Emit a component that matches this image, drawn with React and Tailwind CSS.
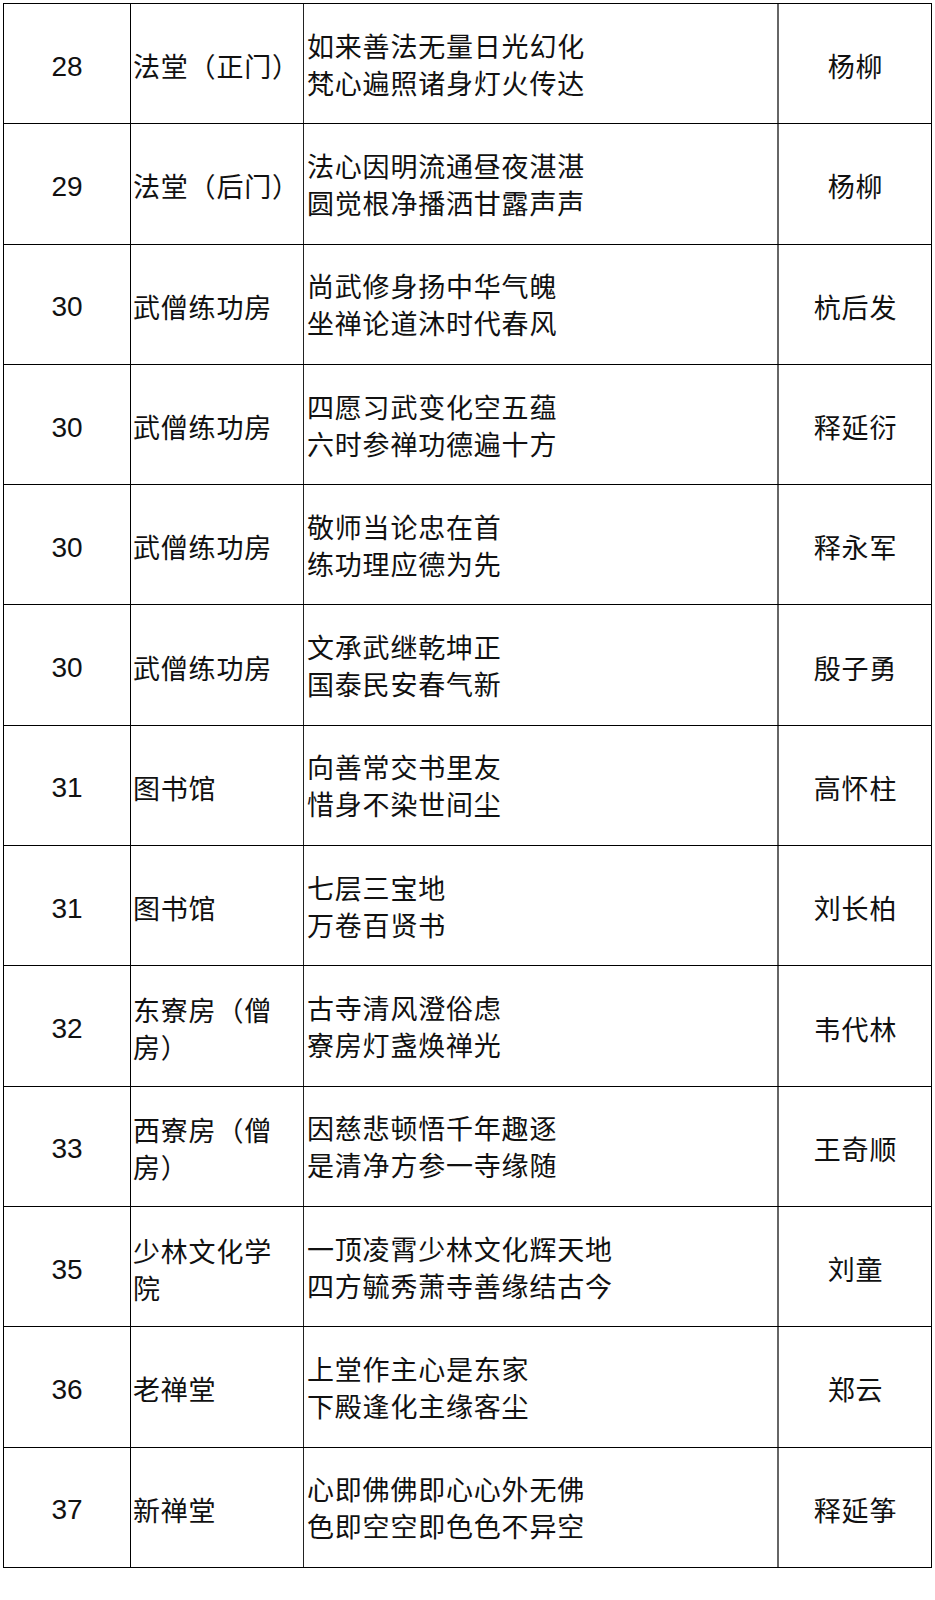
const rows = [
	{ no: "28", place: ["法堂（正门）"], lines: ["如来善法无量日光幻化", "梵心遍照诸身灯火传达"], by: "杨柳" },
	{ no: "29", place: ["法堂（后门）"], lines: ["法心因明流通昼夜湛湛", "圆觉根净播洒甘露声声"], by: "杨柳" },
	{ no: "30", place: ["武僧练功房"], lines: ["尚武修身扬中华气魄", "坐禅论道沐时代春风"], by: "杭后发" },
	{ no: "30", place: ["武僧练功房"], lines: ["四愿习武变化空五蕴", "六时参禅功德遍十方"], by: "释延衍" },
	{ no: "30", place: ["武僧练功房"], lines: ["敬师当论忠在首", "练功理应德为先"], by: "释永军" },
	{ no: "30", place: ["武僧练功房"], lines: ["文承武继乾坤正", "国泰民安春气新"], by: "殷子勇" },
	{ no: "31", place: ["图书馆"], lines: ["向善常交书里友", "惜身不染世间尘"], by: "高怀柱" },
	{ no: "31", place: ["图书馆"], lines: ["七层三宝地", "万卷百贤书"], by: "刘长柏" },
	{ no: "32", place: ["东寮房（僧", "房）"], lines: ["古寺清风澄俗虑", "寮房灯盏焕禅光"], by: "韦代林" },
	{ no: "33", place: ["西寮房（僧", "房）"], lines: ["因慈悲顿悟千年趣逐", "是清净方参一寺缘随"], by: "王奇顺" },
	{ no: "35", place: ["少林文化学", "院"], lines: ["一顶凌霄少林文化辉天地", "四方毓秀萧寺善缘结古今"], by: "刘童" },
	{ no: "36", place: ["老禅堂"], lines: ["上堂作主心是东家", "下殿逢化主缘客尘"], by: "郑云" },
	{ no: "37", place: ["新禅堂"], lines: ["心即佛佛即心心外无佛", "色即空空即色色不异空"], by: "释延筝" },
];

const cjk = "font-['Noto_Sans_CJK_SC',sans-serif] text-[27px] tracking-[0.8px] text-[#111] leading-[37px]";

const Row = ({ row }) => (
	<div className="grid grid-cols-[127px_173px_475px_153px] h-[120.3px] border-b border-black">
		<div className="flex items-center justify-center border-r border-black pt-[6px] font-['Liberation_Sans',sans-serif] text-[28px] text-[#111]">
			{row.no}
		</div>
		<div className={`flex flex-col justify-center border-r border-[#222] pl-[2px] pt-[4px] ${cjk}`}>
			{row.place.map((l) => (
				<span key={l} className="whitespace-nowrap">{l}</span>
			))}
		</div>
		<div className={`flex flex-col justify-center border-r-2 border-[#666] pl-[3px] ${cjk}`}>
			{row.lines.map((l) => (
				<span key={l} className="whitespace-nowrap">{l}</span>
			))}
		</div>
		<div className={`flex items-center justify-center pt-[4px] ${cjk}`}>{row.by}</div>
	</div>
);

export default function App() {
	return (
		<div className="w-[935px] h-[1600px] bg-white pt-[3px] pl-[3px]">
			<div className="w-[929px] border-t border-l border-r border-black">
				{rows.map((r, i) => (
					<Row key={i} row={r} />
				))}
			</div>
		</div>
	);
}
